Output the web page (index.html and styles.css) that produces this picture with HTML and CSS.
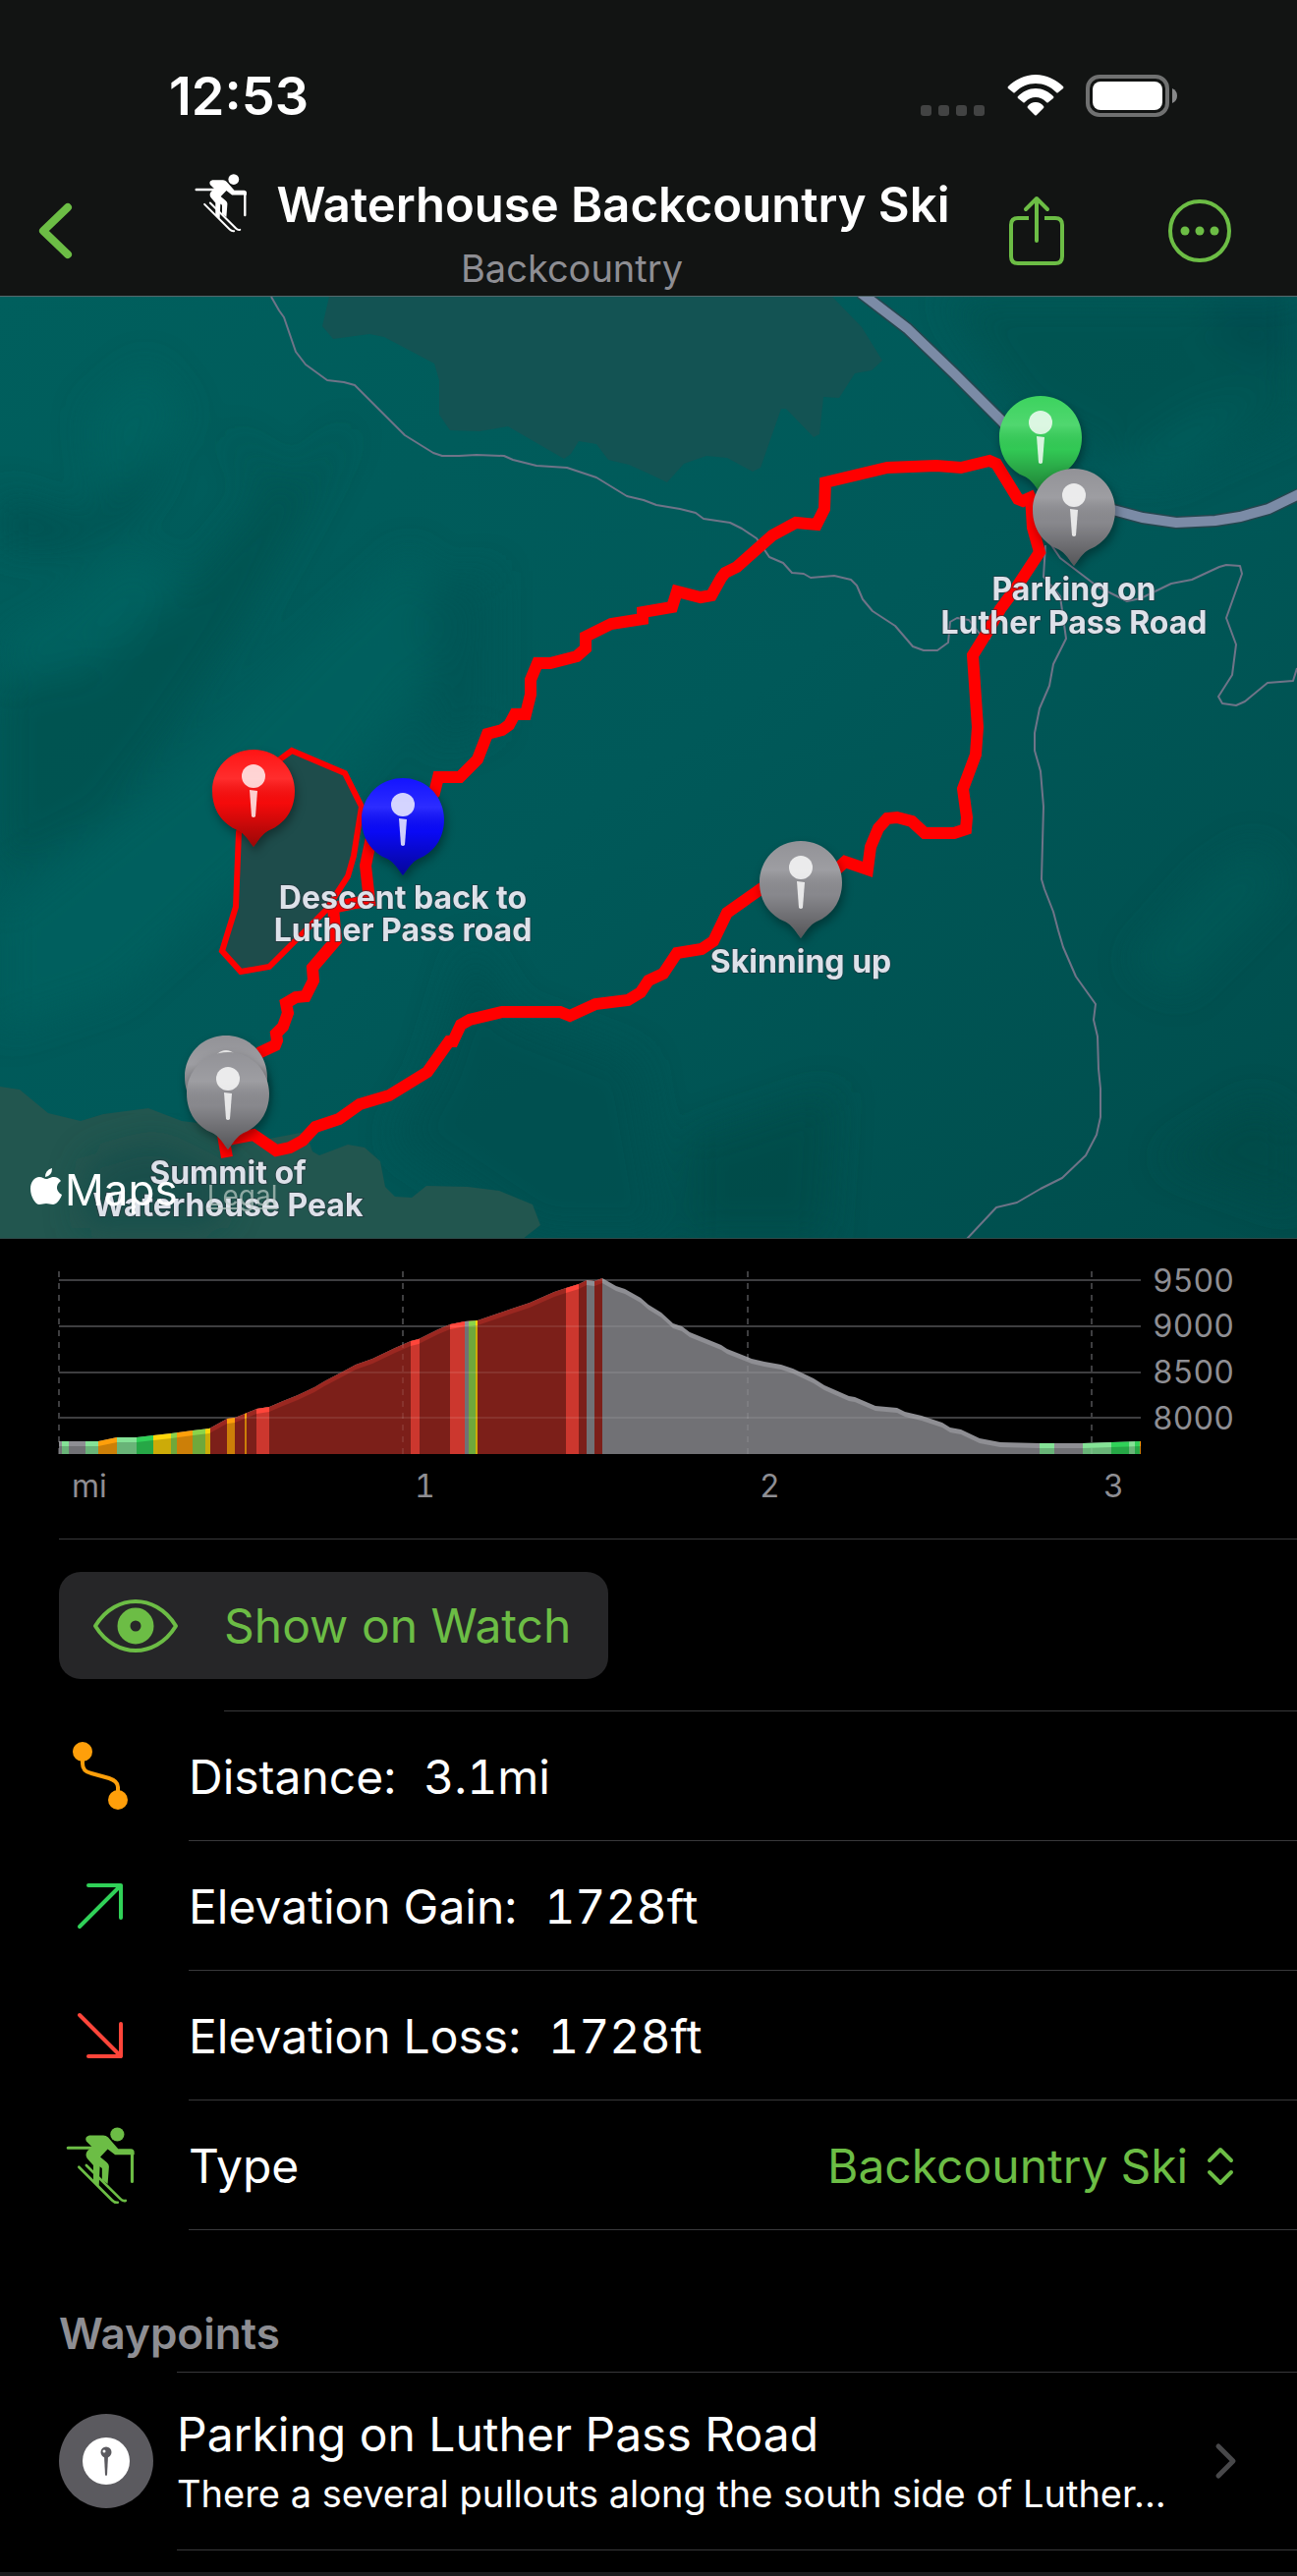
FILE: index.html
```html
<!DOCTYPE html>
<html lang="en">
<head>
    <meta charset="UTF-8">
    <meta name="viewport" content="width=device-width, initial-scale=1.0">
    <title>Waterhouse Backcountry Ski</title>
    <link rel="stylesheet" href="styles.css">
</head>
<body>
    <!-- shared icons -->
    <svg class="defs" width="0" height="0" aria-hidden="true">
        <symbol id="skier" viewBox="150 1353 160 180">
            <circle cx="268" cy="1372" r="16"/>
            <path d="M155 1403H212M302 1412V1480" fill="none" stroke="currentColor" stroke-width="7" stroke-linecap="round"/>
            <path d="M204 1374H236Q242 1374 247 1379L270 1405H299Q307 1405 307 1413V1419H263L246 1406L229 1424L244 1436Q249 1440 249 1446L246 1486L233 1476V1450L228 1446L226 1490L213 1480V1443L199 1427Q193 1418 200 1409L210 1401L197 1388Q192 1377 204 1374Z"/>
            <path d="M180 1447L256 1523Q262 1529 269 1528M197 1443L275 1520Q281 1526 287 1524" fill="none" stroke="currentColor" stroke-width="6" stroke-linecap="round"/>
        </symbol>
        <symbol id="pin" viewBox="-60 -60 120 130" overflow="visible">
            <path d="M0 -42C25 -42 42 -22 42 0C42 20 31 34 16 40C9 43 4 52 0 57C-4 52 -9 43 -16 40C-31 34 -42 20 -42 0C-42 -22 -25 -42 0 -42Z" fill="currentColor"/>
            <path d="M0 -42C25 -42 42 -22 42 0C42 20 31 34 16 40C9 43 4 52 0 57C-4 52 -9 43 -16 40C-31 34 -42 20 -42 0C-42 -22 -25 -42 0 -42Z" fill="url(#shine)"/>
            <circle cx="0" cy="-15" r="12" fill="#fff" fill-opacity=".8"/>
            <path d="M-4 -1L4 0L2 26Q0 28 -2 26Z" fill="#fff" fill-opacity=".8"/>
        </symbol>
    </svg>

    <header class="top">
        <div class="status">
            <span class="time">12:53</span>
            <span class="status-icons">
                <svg width="66" height="42" viewBox="0 0 66 42" fill="#424343"><rect y="31" width="11" height="11" rx="3"/><rect x="18" y="31" width="11" height="11" rx="3"/><rect x="36" y="31" width="11" height="11" rx="3"/><rect x="54" y="31" width="11" height="11" rx="3"/></svg>
                <svg width="58" height="43" viewBox="0 0 58 43" fill="#fff"><path d="M29 0C40 0 50 5 57 12Q58 13 57 14L52 18Q51 19 50 18C44 12 37 9 29 9S14 12 8 18Q7 19 6 18L1 14Q0 13 1 12C8 5 18 0 29 0Z"/><path d="M29 14C36 14 42 17 47 22Q48 23 47 24L42 28Q41 29 40 28Q35 23 29 23T18 28Q17 29 16 28L11 24Q10 23 11 22C16 17 22 14 29 14Z"/><path d="M29 28Q34 28 37 32Q38 33 37 34L30 41Q29 42 28 41L21 34Q20 33 21 32Q24 28 29 28Z"/></svg>
                <svg width="94" height="43" viewBox="0 0 94 43"><rect x="2" y="2" width="81" height="39" rx="12" fill="none" stroke="#707171" stroke-width="4"/><rect x="7" y="7" width="71" height="29" rx="8" fill="#fff"/><path d="M88 14Q93 16 93 21.500T88 29Z" fill="#88898a"/></svg>
            </span>
        </div>
        <nav class="nav">
            <button class="nav-btn" aria-label="Back">
                <svg width="38" height="60" viewBox="0 0 38 60" fill="none" stroke="currentColor" stroke-width="8" stroke-linecap="round" stroke-linejoin="round"><path d="M31 6L6 30L31 54"/></svg>
            </button>
            <div class="heading">
                <div class="heading-row">
                    <svg width="54" height="61" fill="currentColor"><use href="#skier"/></svg>
                    <h1>Waterhouse Backcountry Ski</h1>
                </div>
                <p>Backcountry</p>
            </div>
            <div class="actions">
                <button class="nav-btn" aria-label="Share">
                    <svg width="58" height="74" viewBox="0 0 58 74" fill="none" stroke="currentColor" stroke-width="4" stroke-linecap="round" stroke-linejoin="round"><path d="M21 24H10Q3 24 3 31V63Q3 70 10 70H48Q55 70 55 63V31Q55 24 48 24H37" stroke-linecap="butt"/><path d="M29 47V4M18 15L29 4L40 15"/></svg>
                </button>
                <button class="nav-btn" aria-label="More">
                    <svg width="66" height="66" viewBox="0 0 66 66"><circle cx="33" cy="33" r="30" fill="none" stroke="currentColor" stroke-width="4"/><g fill="currentColor"><circle cx="18" cy="33" r="4.500"/><circle cx="33" cy="33" r="4.500"/><circle cx="48" cy="33" r="4.500"/></g></svg>
                </button>
            </div>
        </nav>
    </header>

    <section class="map">
        <svg class="map-canvas" viewBox="0 302 1320 958" role="img" aria-label="Route map">
            <defs>
                <linearGradient id="shine" x1="0" y1="0" x2="0" y2="1">
                    <stop offset="0" stop-color="#fff" stop-opacity=".04"/>
                    <stop offset=".3" stop-color="#fff" stop-opacity=".14"/>
                    <stop offset=".55" stop-color="#000" stop-opacity=".04"/>
                    <stop offset="1" stop-color="#000" stop-opacity=".4"/>
                </linearGradient>
                <linearGradient id="ground" x1="0" y1="0" x2="1" y2="1">
                    <stop offset="0" stop-color="#005f5d"/>
                    <stop offset=".5" stop-color="#005959"/>
                    <stop offset="1" stop-color="#004d4c"/>
                </linearGradient>
                <filter id="soft" x="-30%" y="-30%" width="160%" height="160%"><feGaussianBlur stdDeviation="18"/></filter>
                <path id="highway" d="M876 298L923 334L971 380L1020 429L1060 474L1095 502L1133 519L1163 527L1197 532L1237 530L1262 526L1291 518L1322 503"/>
            </defs>
            <rect y="302" width="1320" height="959" fill="url(#ground)"/>

            <!-- hill shading -->
            <g filter="url(#soft)">
                <path d="M0 500L40 515L90 530L150 460L165 480L130 530L70 560L0 560Z" fill="#004c4b" opacity=".6"/>
                <path d="M230 440L300 500L360 430L300 540L250 630L170 750L110 830L0 890V700L90 680L190 600L270 500Z" fill="#004e4d" opacity=".6"/>
                <path d="M60 620L130 560L190 590L120 660L20 690L0 650Z" fill="#006964" opacity=".45"/>
                <path d="M90 420L150 370L190 420L140 490L100 500Z" fill="#006562" opacity=".5"/>
                <path d="M180 790L330 640L420 560L470 640L330 820L120 1010L0 1050V930Z" fill="#006260" opacity=".6"/>
                <path d="M430 600L500 580L500 740L440 760Z" fill="#005453" opacity=".6"/>
                <path d="M480 960L520 1030L650 1080L680 1260H550L400 1160L440 1090Z" fill="#004f4e" opacity=".7"/>
                <path d="M960 302L1320 302V430L1180 490L1040 420Z" fill="#005150" opacity=".7"/>
                <path d="M1230 302H1320V370L1240 350Z" fill="#004849" opacity=".5"/>
                <path d="M1110 490L1220 420L1290 400L1200 480Z" fill="#005f5e" opacity=".8"/>
                <path d="M700 1160L850 1110L840 1260H700Z" fill="#004846" opacity=".6"/>
                <path d="M1230 890L1280 860L1310 900L1200 1010L1150 980Z" fill="#005c5a" opacity=".5"/>
                <path d="M1180 1180L1280 1120L1320 1150V1230Z" fill="#004947" opacity=".7"/>
            </g>

            <!-- land cover -->
            <path fill="#135353" d="M335 302L328 332L339 345L376 340L391 343L442 370L447 387V422L458 438L488 439L517 434L574 467L581 462L589 449L607 452L619 468L640 473L660 482L679 491L696 472L719 464L740 466L766 480L774 476L795 416H800L828 445L834 442L838 404L854 405L870 380L887 377L898 367L877 333L847 302Z"/>
            <path fill="#22564f" d="M0 1106L20 1109L49 1133L82 1141L105 1134L151 1128L185 1141L227 1146L269 1160L311 1152L318 1172L325 1176L354 1165L371 1168L387 1182L392 1208L402 1218L419 1219L434 1207L476 1208L508 1212L542 1226L550 1247L532 1261H0Z"/>
            <path filter="url(#soft)" fill="#184b49" opacity=".7" d="M90 1180L160 1160L240 1200L220 1250H80Z"/>

            <!-- trails and highway -->
            <g fill="none" stroke="#6f7488" stroke-width="2" stroke-linejoin="round">
                <path d="M276 302L284 316L289 323L301 358L311 371L333 387L350 389L361 392L412 443L441 461L450 464H467L485 463L513 464L522 468L546 474L577 476L607 486L638 505L655 509L668 514L692 518L708 522L716 528L743 532L755 538L770 548L783 567L797 573L806 583L818 584L825 588L849 586L866 590L872 596L878 610L888 622L911 637L929 658L940 662H954L965 654L967 633L974 629L986 631L997 645L1008 650"/>
                <path d="M1064 555L1062 587L1079 607L1085 650L1072 676L1068 698L1058 721L1053 746V764L1059 785L1062 821L1060 895L1063 905L1072 928L1077 947L1082 964L1095 994L1115 1022L1113 1038L1117 1055L1118 1088L1120 1108V1137L1116 1155L1105 1176L1081 1199L1059 1210L1035 1224L1014 1229L984 1261"/>
                <path d="M1060 540L1079 568L1117 597L1147 612L1161 609L1192 594L1213 590L1241 577L1248 575L1262 576L1264 584L1248 629L1258 656L1254 687L1240 709L1244 716L1258 718L1267 714L1290 695L1316 693L1320 680"/>
            </g>
            <use href="#highway" fill="none" stroke="#26464f" stroke-width="13"/>
            <use href="#highway" fill="none" stroke="#7b8ba6" stroke-width="10"/>

            <!-- avalanche area -->
            <path fill="#1e4c4b" stroke="#f00" stroke-width="6" d="M297 764L351 787L368 821L360 871L354 892L332 926L274 984L245 989L226 968L240 923L243 847L258 800L282 775Z"/>

            <!-- route -->
            <g fill="none" stroke="#f00" stroke-width="12" stroke-linejoin="miter">
                <path d="M1054 504L1041 510L1036 508L1014 472L1007 469L978 476L953 474L903 476L840 491L839 518L831 534L810 532L786 545L750 577L738 583L734 588L724 606L713 608L689 602L684 618L654 623V630L622 635L596 648V660L587 668L560 675H547L540 692V707L535 727H524L518 738L511 743L496 747L486 773L468 791H446L442 807L410 834L377 857L372 881L376 917L362 919L339 924L342 957L318 985L319 998L311 1014L301 1015L291 1021L293 1031L288 1045L281 1052L282 1059L280 1064L265 1071L232 1100"/>
                <path d="M231 1178L226 1150L232 1160L258 1155L281 1171L295 1168L308 1161L321 1147L345 1139L366 1124L396 1115L435 1091L457 1060H461L469 1043L478 1038L511 1030H570L580 1034L606 1022L639 1018L652 1010L660 998L675 991L689 970L714 966L726 958L740 929L774 905L815 878L846 890L860 877L883 885L886 862L894 843L903 833L913 832L928 836L941 848H971L983 844L984 832L980 803L993 768L995 740L990 667L1005 643L1018 620L1035 597L1058 562L1051 537L1049 505"/>
            </g>

            <g class="pins">
                <use href="#pin" x="999" y="385" width="120" height="130" color="#34d158"/>
                <use href="#pin" x="1033" y="459" width="120" height="130" color="#8e8e93"/>
                <use href="#pin" x="198" y="745" width="120" height="130" color="#ff0b0b"/>
                <use href="#pin" x="350" y="774" width="120" height="130" color="#0a0aff"/>
                <use href="#pin" x="755" y="838" width="120" height="130" color="#8e8e93"/>
                <use href="#pin" x="170" y="1036" width="120" height="130" color="#8e8e93"/>
                <use href="#pin" x="172" y="1053" width="120" height="130" color="#8e8e93"/>
            </g>

            <g class="pin-label">
                <text x="1093" y="611">Parking on</text>
                <text x="1093" y="645">Luther Pass Road</text>
                <text x="410" y="925">Descent back to</text>
                <text x="410" y="958">Luther Pass road</text>
                <text x="815" y="990">Skinning up</text>
                <text x="232" y="1205">Summit of</text>
                <text x="232" y="1238">Waterhouse Peak</text>
            </g>
        </svg>
        <div class="attribution">
            <svg width="32" height="38" viewBox="0 0 32 38" fill="#fff"><path d="M22 0Q22 8 15 9Q15 2 22 0ZM16 11C19 11 20 9 24 9Q28 9 31 13C25 17 26 24 32 27C30 33 26 37 23 37C20 37 19 36 16 36S12 37 9 37C5 37 0 29 0 21C0 14 4 9 9 9C12 9 14 11 16 11Z"/></svg>
            <span class="maps">Maps</span>
            <a href="#legal" class="legal">Legal</a>
        </div>
    </section>

    <section class="chart">
        <svg viewBox="0 1261 1320 305" role="img" aria-label="Elevation profile">
            <defs>
                <path id="profile" d="M60 1467H100L119 1463H139L156 1461L174 1459L196 1456L213 1454L231 1444L239 1443L249 1439L261 1434L274 1432L288 1426L303 1420L320 1412L330 1406L349 1396L362 1389L379 1383L402 1372L418 1365L426 1363L446 1353L458 1348L473 1345L486 1344L518 1333L539 1326L564 1315L576 1311L589 1307L597 1303L605 1304L613 1301L627 1309L636 1312L652 1321L660 1328L673 1336L685 1347L694 1350L702 1356L734 1369L740 1373L765 1383L778 1386L795 1389L807 1393L828 1403L839 1410L864 1421L870 1422L891 1431L913 1433L921 1437L938 1441L959 1448L967 1453L978 1455L997 1464L1018 1468L1058 1469H1102L1161 1467V1480H60Z"/>
                <clipPath id="area"><use href="#profile"/></clipPath>
                <g id="grid" fill="none">
                    <path d="M60 1303H1161M60 1350H1161M60 1397H1161M60 1443H1161" stroke-width="2"/>
                    <path d="M60 1294V1480M410 1294V1480M761 1294V1480M1111 1294V1480" stroke-width="2" stroke-dasharray="6 6"/>
                </g>
            </defs>
            <use href="#grid" stroke="#3e3e40"/>
            <!-- one colour per grade band -->
            <g clip-path="url(#area)">
                <rect class="flat" x="60" y="1300" width="1101" height="180"/>
                <rect class="steepest" x="214" y="1300" width="399" height="180"/>
                <rect class="mint" x="63" y="1300" width="7" height="180"/>
                <rect class="mint" x="87" y="1300" width="13" height="180"/>
                <rect class="orange" x="100" y="1300" width="19" height="180"/>
                <rect class="mint" x="119" y="1300" width="20" height="180"/>
                <rect class="green" x="139" y="1300" width="17" height="180"/>
                <rect class="yellow" x="156" y="1300" width="18" height="180"/>
                <rect class="lime" x="174" y="1300" width="6" height="180"/>
                <rect class="orange" x="180" y="1300" width="16" height="180"/>
                <rect class="lime" x="196" y="1300" width="13" height="180"/>
                <rect class="yellow" x="209" y="1300" width="5" height="180"/>
                <rect class="orange" x="231" y="1300" width="8" height="180"/>
                <rect class="orange" x="249" y="1300" width="2" height="180"/>
                <rect class="steep" x="261" y="1300" width="13" height="180"/>
                <rect class="steep" x="418" y="1300" width="9" height="180"/>
                <rect class="steep" x="458" y="1300" width="15" height="180"/>
                <rect class="flat" x="473" y="1300" width="4" height="180"/>
                <rect class="lime" x="477" y="1300" width="7" height="180"/>
                <rect class="yellow" x="484" y="1300" width="2" height="180"/>
                <rect class="steep" x="576" y="1300" width="13" height="180"/>
                <rect class="flat" x="597" y="1300" width="8" height="180"/>
                <rect class="mint" x="1058" y="1300" width="15" height="180"/>
                <rect class="mint" x="1102" y="1300" width="29" height="180"/>
                <rect class="green" x="1131" y="1300" width="18" height="180"/>
                <rect class="mint" x="1149" y="1300" width="6" height="180"/>
                <rect class="green" x="1155" y="1300" width="5" height="180"/>
                <rect class="orange" x="1160" y="1300" width="1" height="180"/>
                <use href="#profile" transform="translate(0 5)" fill="#000" fill-opacity=".2"/>
                <use href="#grid" stroke="#fff" stroke-opacity=".09"/>
            </g>
            <g class="axis">
                <text x="1173" y="1315">9500</text>
                <text x="1173" y="1361">9000</text>
                <text x="1173" y="1408">8500</text>
                <text x="1173" y="1455">8000</text>
                <text x="73" y="1524">mi</text>
                <text x="422" y="1524">1</text>
                <text x="773" y="1524">2</text>
                <text x="1123" y="1524">3</text>
            </g>
        </svg>
    </section>

    <main>
        <div class="watch">
            <button class="watch-btn">
                <svg width="88" height="56" viewBox="0 0 88 56"><path d="M3 28C14 10 30 3 44 3S74 10 85 28C74 46 58 53 44 53S14 46 3 28Z" fill="none" stroke="currentColor" stroke-width="4" stroke-linejoin="round"/><circle cx="44" cy="28" r="12" fill="none" stroke="currentColor" stroke-width="13"/></svg>
                Show on Watch
            </button>
        </div>

        <ul class="stats">
            <li class="row">
                <span class="row-icon orange-icon"><svg width="56" height="70" viewBox="0 0 56 70"><circle cx="10" cy="10" r="10" fill="currentColor"/><circle cx="46" cy="59" r="10" fill="currentColor"/><path d="M10 18V22C10 29 14 31 19 32L37 37Q46 40 46 46V50" fill="none" stroke="currentColor" stroke-width="4"/></svg></span>
                <div class="row-body"><span>Distance:</span><span>3.1mi</span></div>
            </li>
            <li class="row">
                <span class="row-icon green-icon"><svg width="48" height="48" viewBox="0 0 48 48" fill="none" stroke="currentColor" stroke-width="4" stroke-linecap="round" stroke-linejoin="round"><path d="M3 45L45 3M12 3H45V36"/></svg></span>
                <div class="row-body"><span>Elevation Gain:</span><span>1728ft</span></div>
            </li>
            <li class="row">
                <span class="row-icon red-icon"><svg width="48" height="48" viewBox="0 0 48 48" fill="none" stroke="currentColor" stroke-width="4" stroke-linecap="round" stroke-linejoin="round"><path d="M3 3L45 45M12 45H45V12"/></svg></span>
                <div class="row-body"><span>Elevation Loss:</span><span>1728ft</span></div>
            </li>
            <li class="row">
                <span class="row-icon accent-icon"><svg width="71" height="80" fill="currentColor"><use href="#skier"/></svg></span>
                <div class="row-body">
                    <label for="type">Type</label>
                    <span class="picker">
                        <select id="type"><option>Backcountry Ski</option></select>
                        <svg width="28" height="40" viewBox="0 0 28 40" fill="none" stroke="currentColor" stroke-width="4" stroke-linecap="round" stroke-linejoin="round"><path d="M3 14L14 3L25 14M3 26L14 37L25 26"/></svg>
                    </span>
                </div>
            </li>
        </ul>

        <h2>Waypoints</h2>
        <a class="waypoint" href="#parking">
            <span class="badge">
                <svg width="96" height="96" viewBox="0 0 96 96"><circle cx="48" cy="48" r="48" fill="#5b5a5f"/><circle cx="48" cy="48" r="24" fill="#fff"/><circle cx="48" cy="39" r="5.500" fill="#5b5a5f"/><circle cx="46" cy="38" r="1.500" fill="#fff"/><path d="M46 43H50L49 62Q48 64 47 62Z" fill="#5b5a5f"/></svg>
            </span>
            <span class="waypoint-body">
                <span class="waypoint-text">
                    <span class="waypoint-name">Parking on Luther Pass Road</span>
                    <span class="waypoint-note">There a several pullouts along the south side of Luther...</span>
                </span>
                <svg width="24" height="38" viewBox="0 0 24 38" fill="none" stroke="#48484a" stroke-width="5" stroke-linecap="round" stroke-linejoin="round"><path d="M4 4L19 19L4 34"/></svg>
            </span>
        </a>
    </main>
    <footer class="toolbar"></footer>
</body>
</html>
```

FILE: styles.css
```css
* {
    box-sizing: border-box;
}

body {
    margin: 0;
    background-color: #000;
    color: #fff;
    font-family: Inter, "Noto Sans", sans-serif;
    font-size: 48px;
}

svg {
    display: block;
    flex: none;
}

button {
    border: none;
    background: none;
    padding: 0;
    font: inherit;
    color: #6cbd45;
    cursor: pointer;
}

.defs {
    position: absolute;
}

/* Header */
.top {
    background-color: #121413;
    border-bottom: 1px solid #56686c;
}

.status {
    display: flex;
    justify-content: space-between;
    align-items: center;
    padding: 68px 121px 0 172px;
    height: 126px;
}

.time {
    font-size: 54px;
    font-weight: 600;
}

.status-icons {
    display: flex;
    gap: 22px;
}

.nav {
    display: flex;
    justify-content: space-between;
    align-items: center;
    height: 175px;
    padding: 42px 66px 0 38px;
}

.actions {
    display: flex;
    align-items: center;
    gap: 104px;
}

.heading {
    margin-left: 62px;
    text-align: center;
}

.heading-row {
    display: flex;
    justify-content: center;
    gap: 30px;
    margin-top: 10px;
}

h1 {
    margin: 0;
    font-size: 49px;
    font-weight: 600;
    line-height: 66px;
}

.heading p {
    margin: 0;
    font-size: 38px;
    line-height: 62px;
    color: #8e8e93;
}

/* Map */
.map {
    position: relative;
    border-bottom: 1px solid #2f4a4a;
}

.map-canvas {
    width: 100%;
}

.pins use {
    filter: drop-shadow(2px 5px 5px rgba(0, 0, 0, 0.35));
}

.pin-label {
    font-size: 32px;
    font-weight: 700;
    text-anchor: middle;
    fill: #dde1e9;
    stroke: rgba(40, 50, 60, 0.6);
    stroke-width: 2px;
    paint-order: stroke;
}

.attribution {
    position: absolute;
    left: 31px;
    bottom: 22px;
    display: flex;
    align-items: baseline;
}

.maps {
    margin-left: 3px;
    font-size: 44px;
}

.legal {
    margin-left: 30px;
    font-size: 28px;
    color: rgba(190, 205, 200, 0.7);
}

/* Elevation chart */
.chart svg {
    width: 100%;
}

.chart::after {
    content: "";
    display: block;
    margin-left: 60px;
    border-top: 1px solid #38383a;
}

.axis {
    font-size: 32px;
    font-variant-numeric: tabular-nums;
    fill: #8e8e93;
}

.flat { fill: #8e8e93; }
.mint { fill: #84e296; }
.green { fill: #30d158; }
.lime { fill: #8bd34a; }
.yellow { fill: #ffd60a; }
.orange { fill: #ff9f0a; }
.steep { fill: #ff453a; }
.steepest { fill: #9b2720; }

/* Details */
.watch {
    padding: 33px 0 0 60px;
}

.watch::after {
    content: "";
    display: block;
    margin: 32px 0 0 168px;
    border-top: 1px solid #38383a;
}

.watch-btn {
    display: flex;
    align-items: center;
    gap: 46px;
    height: 109px;
    padding: 0 38px 0 34px;
    border-radius: 22px;
    background-color: #262628;
}

.stats {
    list-style: none;
    margin: 0;
    padding: 0;
    font-variant-numeric: tabular-nums;
}

.row {
    display: flex;
    padding-left: 60px;
    height: 132px;
}

.row-icon {
    display: flex;
    align-items: center;
    justify-content: center;
    width: 84px;
    margin-right: 48px;
}

.orange-icon { color: #ff9f0a; }
.green-icon { color: #30d158; }
.red-icon { color: #ff453a; }
.accent-icon { color: #6cbd45; }

.row-body {
    flex: 1;
    display: flex;
    align-items: center;
    gap: 28px;
    padding: 2px 64px 0 0;
    border-bottom: 1px solid #38383a;
}

.picker {
    display: flex;
    align-items: center;
    gap: 18px;
    margin-left: auto;
    color: #6cbd45;
}

select {
    appearance: none;
    border: none;
    padding: 0;
    background: none;
    font: inherit;
    color: inherit;
}

h2 {
    margin: 0;
    padding: 74px 0 8px 60px;
    font-size: 44px;
    font-weight: 600;
    line-height: 62px;
    color: #8e8e93;
}

.waypoint {
    display: flex;
    align-items: center;
    padding-left: 60px;
    color: inherit;
    text-decoration: none;
}

.badge {
    margin-right: 24px;
}

.waypoint-body {
    flex: 1;
    display: flex;
    align-items: center;
    justify-content: space-between;
    height: 182px;
    padding-right: 60px;
    border-top: 1px solid #38383a;
    border-bottom: 1px solid #38383a;
}

.waypoint-text {
    display: flex;
    flex-direction: column;
    padding-top: 2px;
}

.waypoint-name {
    line-height: 64px;
}

.waypoint-note {
    font-size: 38px;
    line-height: 56px;
}

.toolbar {
    height: 4px;
    margin-top: 22px;
    background-color: #1c1c1e;
}
```
